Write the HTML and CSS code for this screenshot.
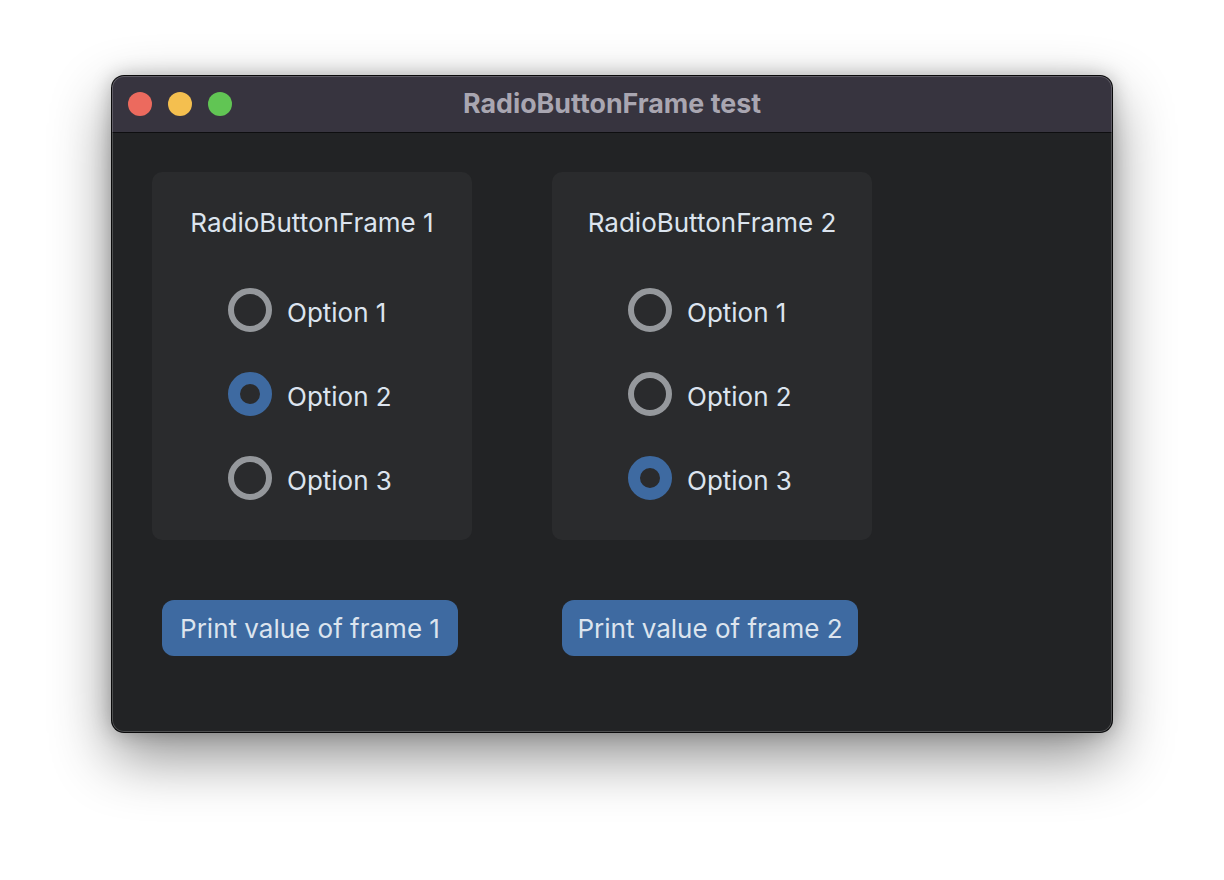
FILE: index.html
```html
<!DOCTYPE html>
<html>
<head>
<meta charset="utf-8">
<link rel="stylesheet" href="styles.css">
</head>
<body>
<div class="stage">
  <div class="window">
    <div class="titlebar">
      <div class="lights">
        <span class="light red"></span>
        <span class="light yellow"></span>
        <span class="light green"></span>
      </div>
      <div class="title">RadioButtonFrame test</div>
    </div>
    <div class="content">
      <div class="column">
        <div class="frame">
          <div class="frame-title">RadioButtonFrame 1</div>
          <div class="options">
            <div class="option"><span class="radio"></span><span class="label">Option 1</span></div>
            <div class="option"><span class="radio checked"></span><span class="label">Option 2</span></div>
            <div class="option"><span class="radio"></span><span class="label">Option 3</span></div>
          </div>
        </div>
        <div class="button">Print value of frame 1</div>
      </div>
      <div class="column">
        <div class="frame">
          <div class="frame-title">RadioButtonFrame 2</div>
          <div class="options">
            <div class="option"><span class="radio"></span><span class="label">Option 1</span></div>
            <div class="option"><span class="radio"></span><span class="label">Option 2</span></div>
            <div class="option"><span class="radio checked"></span><span class="label">Option 3</span></div>
          </div>
        </div>
        <div class="button">Print value of frame 2</div>
      </div>
    </div>
  </div>
</div>
</body>
</html>
```
FILE: styles.css
```css
* { box-sizing: border-box; }
html, body { margin: 0; padding: 0; }
body {
  width: 1224px;
  height: 880px;
  background: #ffffff;
  font-family: Inter, "Noto Sans", sans-serif;
  overflow: hidden;
}
.stage {
  padding: 76px 0 0 112px;
}
.window {
  width: 1000px;
  height: 656px;
  border-radius: 12px;
  background: #222325;
  box-shadow: 0 0 0 1px #0a0a0b, 0 24px 60px rgba(0,0,0,0.45), 0 0 20px rgba(0,0,0,0.25);
  overflow: hidden;
  display: flex;
  flex-direction: column;
  position: relative;
}
.window::after {
  content: "";
  position: absolute;
  inset: 0;
  border-radius: 12px;
  box-shadow: inset 0 0 0 1px rgba(255,255,255,0.2);
  pointer-events: none;
}
.titlebar {
  height: 57px;
  background: #37343f;
  border-bottom: 1px solid #0e0e10;
  display: flex;
  align-items: center;
  position: relative;
}
.lights {
  display: flex;
  gap: 16px;
  padding-left: 16px;
}
.light {
  width: 24px;
  height: 24px;
  border-radius: 50%;
  display: block;
}
.red { background: #ec6a5e; }
.yellow { background: #f4bf4f; }
.green { background: #61c554; }
.title {
  position: absolute;
  left: 0;
  right: 0;
  top: 0;
  bottom: 0;
  display: flex;
  align-items: center;
  justify-content: center;
  color: #a9a6b1;
  font-weight: 700;
  font-size: 26.8px;
  padding-bottom: 2px;
  pointer-events: none;
}
.content {
  display: flex;
  gap: 80px;
  padding: 39px 40px 0 40px;
}
.column {
  width: 320px;
  display: flex;
  flex-direction: column;
}
.frame {
  height: 368px;
  background: #2a2b2d;
  border-radius: 10px;
  display: flex;
  flex-direction: column;
  align-items: center;
  padding-top: 36px;
}
.frame-title {
  color: #dce4ee;
  font-size: 26px;
  line-height: 30px;
  height: 30px;
}
.options {
  display: flex;
  flex-direction: column;
  gap: 40px;
  margin-top: 50px;
  align-self: flex-start;
  margin-left: 76px;
}
.option {
  display: flex;
  align-items: center;
  height: 44px;
}
.radio {
  width: 44px;
  height: 44px;
  border-radius: 50%;
  border: 6px solid #95989c;
  display: block;
  flex: none;
}
.radio.checked {
  border: 12px solid #3e6aa1;
}
.label {
  color: #dce4ee;
  font-size: 26px;
  line-height: 30px;
  margin-left: 15px;
  padding-top: 5px;
}
.button {
  margin-top: 60px;
  margin-left: 10px;
  width: 296px;
  height: 56px;
  border-radius: 12px;
  background: #3e6aa1;
  color: #dce4ee;
  font-size: 26px;
  display: flex;
  align-items: center;
  justify-content: center;
}
```
